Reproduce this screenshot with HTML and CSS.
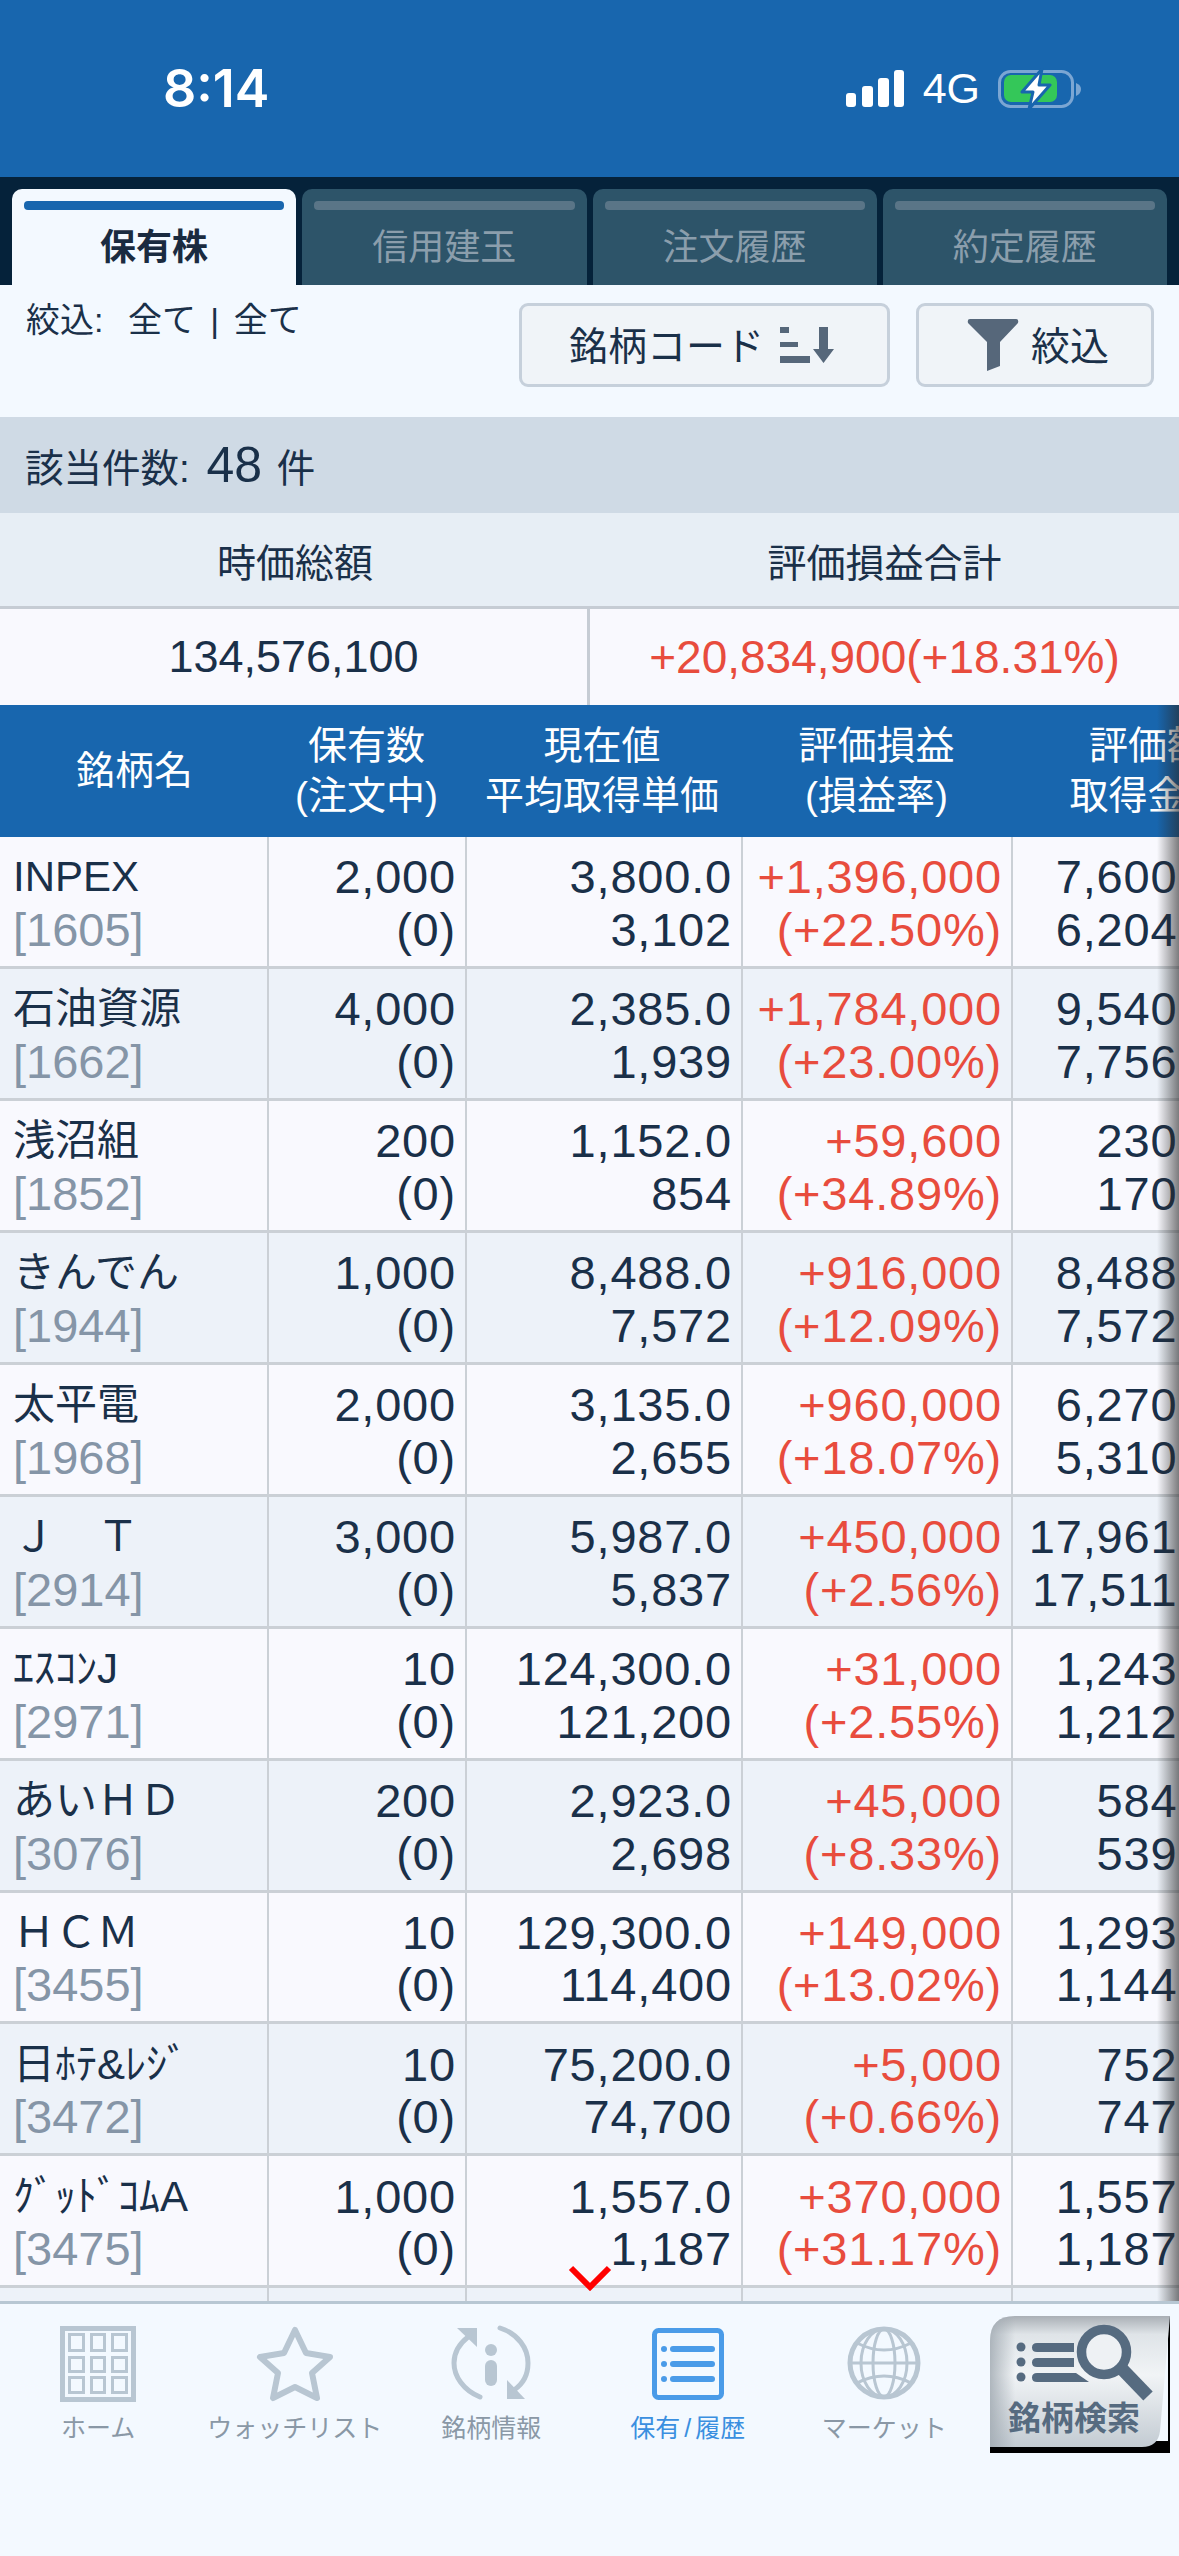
FILE: index.html
```html
<!DOCTYPE html>
<html lang="ja">
<head>
  <meta charset="UTF-8" />
  <title>保有株</title>
  <link rel="stylesheet" href="styles.css">
</head>
<body>
  <div class="status-bar">
    <span class="clock">8:14</span>
    <div class="status-right">
      <svg class="signal" width="58" height="37" viewBox="0 0 58 37">
        <rect x="0" y="23" width="10" height="14" rx="3" fill="#fff"/>
        <rect x="16" y="16" width="11" height="21" rx="3" fill="#fff"/>
        <rect x="32" y="8" width="11" height="29" rx="3" fill="#fff"/>
        <rect x="48" y="0" width="10" height="37" rx="3" fill="#fff"/>
      </svg>
      <span class="network">4G</span>
      <svg class="battery" width="84" height="42" viewBox="0 0 84 42">
        <rect x="1.5" y="3.5" width="73" height="35" rx="11" fill="none" stroke="#7ba6d3" stroke-width="3"/>
        <path d="M78 15 Q83 17 83 21 Q83 26 78 28 Z" fill="#7ba6d3"/>
        <rect x="6" y="7" width="53" height="27" rx="7" fill="#34c759"/>
        <path d="M44 1 L24 24 L35 24 L31 41 L52 17 L41 17 Z" fill="#fff" stroke="#1866ae" stroke-width="3" stroke-linejoin="round"/>
      </svg>
    </div>
  </div>

  <div class="tabs">
    <div class="tab active"><i class="tab-bar"></i>保有株</div>
    <div class="tab"><i class="tab-bar"></i>信用建玉</div>
    <div class="tab"><i class="tab-bar"></i>注文履歴</div>
    <div class="tab"><i class="tab-bar"></i>約定履歴</div>
  </div>

  <div class="filter-row">
    <div class="filter-text">絞込: <span class="filter-value">全て | 全て</span></div>
    <div class="filter-btns">
      <button class="btn btn-sort">銘柄コード
        <svg width="54" height="36" viewBox="0 0 54 36">
          <rect x="0" y="0" width="9" height="6" fill="#56677a"/>
          <rect x="0" y="15" width="18" height="5" fill="#56677a"/>
          <rect x="0" y="29" width="30" height="7" fill="#56677a"/>
          <path d="M39 0 H48 V22 H54 L43.5 36 L33 22 H39 Z" fill="#56677a"/>
        </svg>
      </button>
      <button class="btn btn-filter">
        <svg width="52" height="52" viewBox="0 0 52 52">
          <path d="M3 0 H49 Q52 0 51 4 L33 23 V47 L20 52 V23 L1 4 Q0 0 3 0 Z" fill="#56677a"/>
        </svg>
        絞込
      </button>
    </div>
  </div>

  <div class="count-band">該当件数: <span class="count-num">48</span> 件</div>

  <div class="summary">
    <div class="sum-head">時価総額</div>
    <div class="sum-head">評価損益合計</div>
    <div class="sum-val sum-left">134,576,100</div>
    <div class="sum-val sum-right red">+20,834,900(+18.31%)</div>
  </div>

  <div class="table-wrap">
    <div class="thead">
      <div class="th th-name">銘柄名</div>
      <div class="th">保有数<br>(注文中)</div>
      <div class="th th-price">現在値<br>平均取得単価</div>
      <div class="th">評価損益<br>(損益率)</div>
      <div class="th">評価額<br>取得金額</div>
    </div>

    <div class="row">
      <div class="cell name"><div class="latin">INPEX</div><div class="code">[1605]</div></div>
      <div class="cell"><div>2,000</div><div>(0)</div></div>
      <div class="cell"><div>3,800.0</div><div>3,102</div></div>
      <div class="cell red"><div>+1,396,000</div><div>(+22.50%)</div></div>
      <div class="cell last"><div>7,600,000</div><div>6,204,000</div></div>
    </div>
    <div class="row even">
      <div class="cell name"><div>石油資源</div><div class="code">[1662]</div></div>
      <div class="cell"><div>4,000</div><div>(0)</div></div>
      <div class="cell"><div>2,385.0</div><div>1,939</div></div>
      <div class="cell red"><div>+1,784,000</div><div>(+23.00%)</div></div>
      <div class="cell last"><div>9,540,000</div><div>7,756,000</div></div>
    </div>
    <div class="row">
      <div class="cell name"><div>浅沼組</div><div class="code">[1852]</div></div>
      <div class="cell"><div>200</div><div>(0)</div></div>
      <div class="cell"><div>1,152.0</div><div>854</div></div>
      <div class="cell red"><div>+59,600</div><div>(+34.89%)</div></div>
      <div class="cell last"><div>230,400</div><div>170,800</div></div>
    </div>
    <div class="row even">
      <div class="cell name"><div>きんでん</div><div class="code">[1944]</div></div>
      <div class="cell"><div>1,000</div><div>(0)</div></div>
      <div class="cell"><div>8,488.0</div><div>7,572</div></div>
      <div class="cell red"><div>+916,000</div><div>(+12.09%)</div></div>
      <div class="cell last"><div>8,488,000</div><div>7,572,000</div></div>
    </div>
    <div class="row">
      <div class="cell name"><div>太平電</div><div class="code">[1968]</div></div>
      <div class="cell"><div>2,000</div><div>(0)</div></div>
      <div class="cell"><div>3,135.0</div><div>2,655</div></div>
      <div class="cell red"><div>+960,000</div><div>(+18.07%)</div></div>
      <div class="cell last"><div>6,270,000</div><div>5,310,000</div></div>
    </div>
    <div class="row even">
      <div class="cell name"><div>Ｊ　Ｔ</div><div class="code">[2914]</div></div>
      <div class="cell"><div>3,000</div><div>(0)</div></div>
      <div class="cell"><div>5,987.0</div><div>5,837</div></div>
      <div class="cell red"><div>+450,000</div><div>(+2.56%)</div></div>
      <div class="cell last"><div>17,961,000</div><div>17,511,000</div></div>
    </div>
    <div class="row">
      <div class="cell name"><div>ｴｽｺﾝJ</div><div class="code">[2971]</div></div>
      <div class="cell"><div>10</div><div>(0)</div></div>
      <div class="cell"><div>124,300.0</div><div>121,200</div></div>
      <div class="cell red"><div>+31,000</div><div>(+2.55%)</div></div>
      <div class="cell last"><div>1,243,000</div><div>1,212,000</div></div>
    </div>
    <div class="row even">
      <div class="cell name"><div>あいＨＤ</div><div class="code">[3076]</div></div>
      <div class="cell"><div>200</div><div>(0)</div></div>
      <div class="cell"><div>2,923.0</div><div>2,698</div></div>
      <div class="cell red"><div>+45,000</div><div>(+8.33%)</div></div>
      <div class="cell last"><div>584,600</div><div>539,600</div></div>
    </div>
    <div class="row">
      <div class="cell name"><div>ＨＣＭ</div><div class="code">[3455]</div></div>
      <div class="cell"><div>10</div><div>(0)</div></div>
      <div class="cell"><div>129,300.0</div><div>114,400</div></div>
      <div class="cell red"><div>+149,000</div><div>(+13.02%)</div></div>
      <div class="cell last"><div>1,293,000</div><div>1,144,000</div></div>
    </div>
    <div class="row even">
      <div class="cell name"><div>日ﾎﾃ&amp;ﾚｼﾞ</div><div class="code">[3472]</div></div>
      <div class="cell"><div>10</div><div>(0)</div></div>
      <div class="cell"><div>75,200.0</div><div>74,700</div></div>
      <div class="cell red"><div>+5,000</div><div>(+0.66%)</div></div>
      <div class="cell last"><div>752,000</div><div>747,000</div></div>
    </div>
    <div class="row">
      <div class="cell name"><div>ｸﾞｯﾄﾞｺﾑA</div><div class="code">[3475]</div></div>
      <div class="cell"><div>1,000</div><div>(0)</div></div>
      <div class="cell"><div>1,557.0</div><div>1,187</div></div>
      <div class="cell red"><div>+370,000</div><div>(+31.17%)</div></div>
      <div class="cell last"><div>1,557,000</div><div>1,187,000</div></div>
    </div>
    <div class="row even">
      <div class="cell name"></div>
      <div class="cell"></div>
      <div class="cell"></div>
      <div class="cell"></div>
      <div class="cell last"></div>
    </div>

    <div class="edge-shadow"></div>
    <svg class="more-arrow" width="44" height="26" viewBox="0 0 44 26">
      <path d="M3 3 L22 22 L41 3" fill="none" stroke="#f00" stroke-width="6"/>
    </svg>
  </div>

  <div class="nav">
    <div class="nav-item">
      <svg width="80" height="80" viewBox="0 0 80 80" fill="none" stroke="#b8c6d2">
        <rect x="4.5" y="4.5" width="71" height="71" stroke-width="5"/>
        <g stroke-width="3">
          <rect x="11.5" y="10.5" width="14" height="16"/><rect x="33.5" y="10.5" width="13" height="16"/><rect x="54.5" y="10.5" width="14" height="16"/>
          <rect x="11.5" y="33.5" width="14" height="14"/><rect x="33.5" y="33.5" width="13" height="14"/><rect x="54.5" y="33.5" width="14" height="14"/>
          <rect x="11.5" y="53.5" width="14" height="15"/><rect x="33.5" y="53.5" width="13" height="15"/><rect x="54.5" y="53.5" width="14" height="15"/>
        </g>
      </svg>
      <span>ホーム</span>
    </div>
    <div class="nav-item">
      <svg width="80" height="80" viewBox="0 0 80 80">
        <path d="M40 6 L51 29 L75 33 L57 49 L62 74 L40 63 L18 74 L23 49 L5 33 L29 29 Z" fill="none" stroke="#b8c6d2" stroke-width="6" stroke-linejoin="round"/>
      </svg>
      <span>ウォッチリスト</span>
    </div>
    <div class="nav-item">
      <svg width="80" height="80" viewBox="0 0 80 80">
        <g fill="none" stroke="#b8c6d2" stroke-width="5" stroke-linecap="round">
          <path d="M29 73 C12 66 3 52 3 39 C3 29 8 20 17 13"/>
          <path d="M49 4 C67 10 77 24 77 39 C77 50 72 60 63 66"/>
        </g>
        <g fill="#b8c6d2">
          <path d="M6 4 H26 V23 Z"/>
          <path d="M56 56 V75 H74 Z"/>
          <circle cx="40" cy="26" r="6"/>
          <rect x="34" y="36" width="12" height="26" rx="6"/>
        </g>
      </svg>
      <span>銘柄情報</span>
    </div>
    <div class="nav-item current">
      <svg width="80" height="80" viewBox="0 0 80 80" fill="#4a9be8">
        <rect x="6.5" y="6.5" width="67" height="67" rx="4" fill="none" stroke="#4a9be8" stroke-width="5"/>
        <circle cx="16" cy="25" r="3"/><rect x="22" y="22" width="45" height="6" rx="3"/>
        <circle cx="16" cy="40" r="3"/><rect x="22" y="37" width="45" height="6" rx="3"/>
        <circle cx="16" cy="55" r="3"/><rect x="22" y="52" width="45" height="6" rx="3"/>
      </svg>
      <span class="nav-slash">保有 / 履歴</span>
    </div>
    <div class="nav-item">
      <svg width="80" height="80" viewBox="0 0 80 80" fill="none" stroke="#b8c6d2" stroke-width="3">
        <circle cx="40" cy="39" r="34" stroke-width="5"/>
        <ellipse cx="40" cy="39" rx="11" ry="34"/>
        <ellipse cx="40" cy="39" rx="23" ry="34"/>
        <path d="M6 39 H74"/>
        <path d="M13 19 Q40 33 67 19"/>
        <path d="M13 59 Q40 45 67 59"/>
      </svg>
      <span>マーケット</span>
    </div>
    <div class="search-btn">
      <svg width="180" height="137" viewBox="0 0 180 137">
        <defs>
          <linearGradient id="btnFill" x1="0" y1="0" x2="0" y2="1">
            <stop offset="0" stop-color="#a9afb5"/>
            <stop offset="0.14" stop-color="#dfe4e8"/>
            <stop offset="0.45" stop-color="#f1f4f6"/>
            <stop offset="1" stop-color="#c3cbd2"/>
          </linearGradient>
          <linearGradient id="btnSide" x1="0" y1="0" x2="1" y2="0">
            <stop offset="0" stop-color="#9fa8b0" stop-opacity="0.8"/>
            <stop offset="0.14" stop-color="#9fa8b0" stop-opacity="0"/>
          </linearGradient>
        </defs>
        <path d="M178 0 H180 V137 H0 V125 H178 Z" fill="#000"/>
        <path d="M25 0 H180 L170 115 Q168 131 152 131 H0 V25 Q0 0 25 0 Z" fill="url(#btnFill)"/>
        <path d="M25 0 H180 L170 115 Q168 131 152 131 H0 V25 Q0 0 25 0 Z" fill="url(#btnSide)"/>
        <g fill="#566b80">
          <circle cx="31" cy="31" r="4.5"/><circle cx="31" cy="46" r="4.5"/><circle cx="31" cy="61" r="4.5"/>
          <path d="M47 27 H84 V36 H47 Q42 36 42 31.5 Q42 27 47 27 Z"/>
          <path d="M47 42 H84 V51 H47 Q42 51 42 46.5 Q42 42 47 42 Z"/>
          <path d="M47 57 H86 L99 66 H47 Q42 66 42 61.5 Q42 57 47 57 Z"/>
        </g>
        <circle cx="114" cy="36" r="22.5" fill="#eef1f4" stroke="#566b80" stroke-width="9.5"/>
        <path d="M132 53 L158 80" stroke="#566b80" stroke-width="13"/>
      </svg>
      <span class="search-label">銘柄検索</span>
    </div>
  </div>
</body>
</html>
```

FILE: styles.css
```css
* {
  box-sizing: border-box;
}

html, body {
  margin: 0;
  padding: 0;
}

body {
  width: 1179px;
  height: 2556px;
  overflow: hidden;
  background-color: #f3f9ff;
  color: #1a3049;
  font-family: "Liberation Sans", "Noto Sans CJK JP", sans-serif;
}

.red {
  color: #e84c3d;
}

/* status bar */
.status-bar {
  height: 177px;
  background-color: #1866ae;
  display: flex;
  align-items: center;
  justify-content: space-between;
  padding: 0 97px 0 163px;
  color: #fff;
}

.clock {
  font-family: Inter, sans-serif;
  font-size: 52px;
  font-weight: 600;
}

.status-right {
  display: flex;
  align-items: center;
}

.network {
  font-size: 43px;
  margin-left: 19px;
  margin-right: 18px;
}

/* tabs */
.tabs {
  height: 108px;
  padding: 12px 12px 0;
  background-color: #05223a;
  display: grid;
  grid-template-columns: repeat(4, 1fr);
  gap: 6px;
}

.tab {
  background-color: #2d5469;
  color: #8b9eac;
  font-size: 36px;
  text-align: center;
  border-radius: 10px 10px 0 0;
  padding-top: 12px;
}

.tab.active {
  background-color: #f3f9ff;
  color: #1a2b40;
  font-weight: bold;
}

.tab-bar {
  display: block;
  height: 9px;
  margin: 0 12px 8px;
  border-radius: 4px;
  background-color: #5a7587;
}

.tab.active .tab-bar {
  background-color: #1866ae;
}

/* filter row */
.filter-row {
  height: 132px;
  padding: 18px 25px 0 26px;
  display: flex;
  justify-content: space-between;
  align-items: flex-start;
}

.filter-text {
  font-size: 34px;
  line-height: 34px;
  word-spacing: 5px;
}

.filter-value {
  margin-left: 10px;
}

.filter-btns {
  display: flex;
  gap: 26px;
}

.btn {
  height: 84px;
  border: 3px solid #c6d0db;
  border-radius: 9px;
  background-color: #f0f4f8;
  color: #1a3049;
  font-family: inherit;
  font-size: 39px;
  display: flex;
  align-items: center;
  justify-content: center;
  padding: 0 0 4px;
}

.btn svg {
  margin-top: 4px;
}

.btn-sort {
  width: 371px;
  gap: 16px;
  padding-right: 6px;
}

.btn-filter {
  width: 238px;
  gap: 12px;
  padding-left: 6px;
}

/* count + totals */
.count-band {
  height: 96px;
  background-color: #cfdae5;
  display: flex;
  align-items: center;
  padding-left: 25px;
  font-size: 38.5px;
  white-space: pre;
}

.count-num {
  font-size: 50px;
  margin: 0 4px 0 6px;
}

.summary {
  display: grid;
  grid-template-columns: 590px 589px;
  grid-template-rows: 96px 96px;
  background-color: #f9f9fe;
}

.sum-head {
  background-color: #e7eef5;
  border-bottom: 3px solid #c6ccd4;
  font-size: 39px;
  display: flex;
  align-items: center;
  justify-content: center;
}

.sum-val {
  font-size: 45px;
  display: flex;
  align-items: center;
  justify-content: center;
}

.sum-left {
  border-right: 3px solid #c6ccd4;
}

.sum-right {
  font-size: 46px;
}

/* holdings table */
.table-wrap {
  position: relative;
  height: 1599px;
  overflow: hidden;
  border-bottom: 3px solid #b7c7d3;
}

.thead, .row {
  display: grid;
  grid-template-columns: 269px 198px 276px 270px 272px;
  width: 1285px;
}

.thead {
  height: 132px;
  background-color: #1866ae;
  color: #fff;
}

.th {
  font-size: 39px;
  line-height: 50px;
  text-align: center;
  white-space: nowrap;
  display: flex;
  align-items: center;
  justify-content: center;
  padding-right: 3px;
}

.th-name {
  padding-right: 0;
}

.th-price {
  padding-right: 6px;
}

.row {
  height: 131.95px;
  background-color: #f9f9fe;
  border-bottom: 3px solid #cbd0d6;
}

.row.even {
  background-color: #edf2f9;
}

.cell {
  border-right: 2px solid #cbd0d6;
  padding: 5px 9px 0 0;
  font-size: 47px;
  line-height: 52.5px;
  letter-spacing: 0.8px;
  text-align: right;
  white-space: nowrap;
  display: flex;
  flex-direction: column;
  justify-content: center;
}

.cell.last {
  border-right: none;
  padding-right: 13px;
}

.cell.name {
  padding: 5px 0 0 13px;
  text-align: left;
  font-size: 42px;
  letter-spacing: 0;
}

.latin {
  font-size: 42px;
}

.code {
  font-size: 47px;
  color: #8595a7;
}

.edge-shadow {
  position: absolute;
  top: 0;
  right: 0;
  bottom: 0;
  width: 22px;
  background: linear-gradient(to right, rgba(40, 40, 40, 0), rgba(40, 40, 40, 0.6));
}

.more-arrow {
  position: absolute;
  left: 568px;
  top: 1560px;
}

/* bottom nav */
.nav {
  display: grid;
  grid-template-columns: repeat(6, 1fr);
  padding-top: 20px;
}

.nav-item {
  display: flex;
  flex-direction: column;
  align-items: center;
  gap: 7px;
  color: #8a98a6;
  font-size: 25px;
  line-height: 34px;
  white-space: nowrap;
}

.nav-item.current {
  color: #3a8fe0;
}

.nav-slash {
  word-spacing: -3px;
}

.search-btn {
  position: relative;
  width: 180px;
  height: 137px;
  margin-top: -8px;
  justify-self: end;
  margin-right: 9px;
}

.search-btn svg {
  display: block;
}

.search-label {
  position: absolute;
  left: 18px;
  top: 83px;
  font-size: 33px;
  line-height: 40px;
  font-weight: bold;
  color: #566b80;
  white-space: nowrap;
}
```
